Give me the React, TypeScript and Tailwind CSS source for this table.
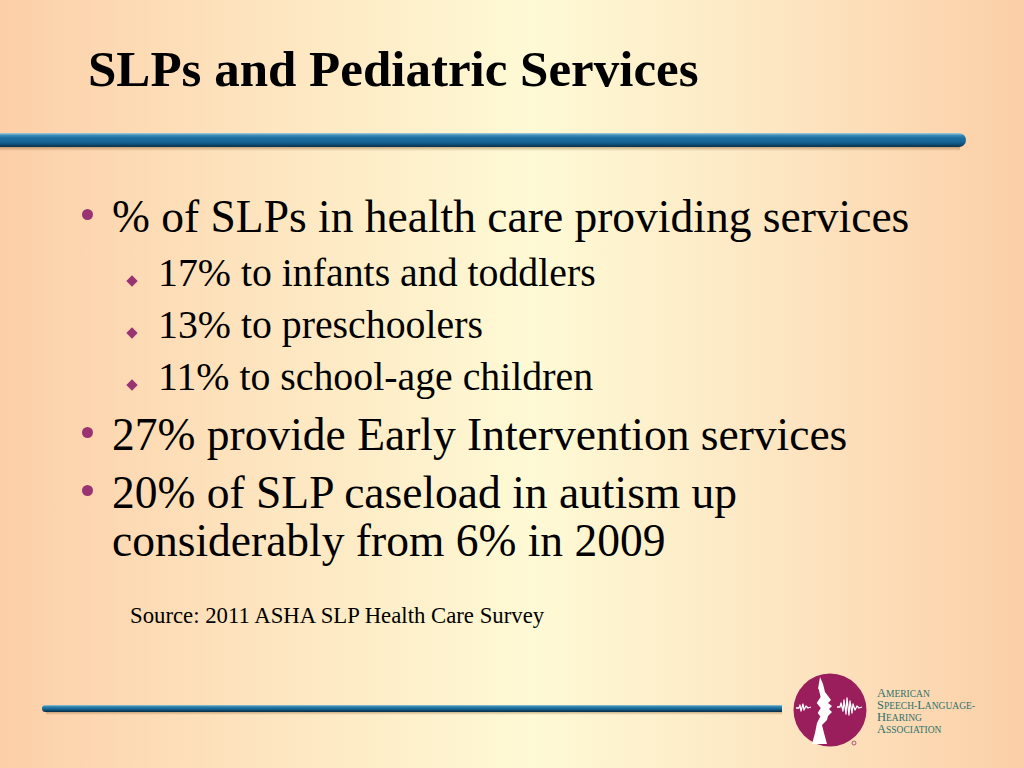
import React from "react";

function MainItem({ children, tight }: { children: React.ReactNode; tight?: boolean }) {
  return (
    <li
      className={
        tight
          ? "mt-[8px] flex items-start text-[45.5px] leading-[48px] [font-family:'Times_New_Roman','Liberation_Serif',serif]"
          : "mt-[6px] flex items-start text-[45.5px] leading-[52px] [font-family:'Times_New_Roman','Liberation_Serif',serif]"
      }
    >
      <span
        className={
          tight
            ? "mt-[16px] h-[11px] w-[11px] shrink-0 rounded-full bg-[#993374]"
            : "mt-[18px] h-[11px] w-[11px] shrink-0 rounded-full bg-[#993374]"
        }
      />
      <span className={tight ? "ml-[19px] w-[800px]" : "ml-[19px]"}>{children}</span>
    </li>
  );
}

function SubItem({ children }: { children: React.ReactNode }) {
  return (
    <li className="ml-[44px] flex items-start text-[39.8px] leading-[52px] [font-family:'Times_New_Roman','Liberation_Serif',serif]">
      <span className="mt-[28px] flex h-[11px] w-[11px] shrink-0 items-center justify-center">
        <span className="h-[8px] w-[8px] rotate-45 bg-[#993374]" />
      </span>
      <span className="ml-[21px]">{children}</span>
    </li>
  );
}

function AshaLogo() {
  return (
    <svg width="74" height="74" viewBox="0 0 74 74" className="shrink-0">
      <circle cx="37" cy="37" r="36.5" fill="#9a1d5c" />
      <path
        d="M27,4 L30,11 L32,19 L38,27 L35,30 L39,33 L36,36 L39,39 L35,43 L34,47 L29,52 L31,60 L34,71 L19,71 L22,60 L24,50 L27,44 L24,40 L27,35 L23,30 L27,24 L25,16 Z"
        fill="#ffffff"
      />
      <path d="M25,16 L27,24 L23,30 L27,35 L24,40 L27,44" fill="none" stroke="#9a1d5c" strokeWidth="1.2" />
      <polyline
        points="3,35 6,35 7,32 8,38 10,31 11,37 13,33 15,35 18,34"
        fill="none"
        stroke="#ffffff"
        strokeWidth="1.3"
        strokeLinejoin="round"
      />
      <polyline
        points="44,34 47,34 48,30 50,38 51,27 53,41 54,25 56,42 57,28 59,40 60,31 62,37 64,33 66,35 69,34"
        fill="none"
        stroke="#ffffff"
        strokeWidth="1.3"
        strokeLinejoin="round"
      />
      <circle cx="61" cy="70" r="2" fill="none" stroke="#9a1d5c" strokeWidth="0.7" />
    </svg>
  );
}

function LogoLine({ big, rest }: { big: string; rest: React.ReactNode }) {
  return (
    <div className="h-[12px] leading-[12px] whitespace-nowrap">
      <span className="text-[12.5px]">{big}</span>
      <span className="text-[9.5px]">{rest}</span>
    </div>
  );
}

export default function App() {
  return (
    <div className="flex h-[768px] w-[1024px] flex-col bg-[linear-gradient(90deg,#fccfa8_0%,#fde2bc_22%,#fefad5_52%,#fde6c2_76%,#fbcfa7_100%)] text-black [font-family:'Times_New_Roman','Liberation_Serif',serif]">
      <h1 className="pl-[88px] pt-[39px] text-[51px] font-bold leading-[60px] [font-family:'Times_New_Roman','Liberation_Serif',serif]">
        SLPs and Pediatric Services
      </h1>

      <div className="mt-[34px] h-[14px] w-[966px] rounded-r-full bg-[linear-gradient(180deg,#a8d0de_0%,#3d8db8_16%,#1a6d9e_36%,#166597_64%,#0e4a70_84%,#0a2f48_100%)]" />
      <div className="h-[4px] w-[960px] bg-[linear-gradient(180deg,rgba(130,85,40,0.45),rgba(130,85,40,0))]" />

      <ul className="mt-[34px] pl-[82px]">
        <MainItem>% of SLPs in health care providing services</MainItem>
        <div className="mt-[4px]">
          <SubItem>17% to infants and toddlers</SubItem>
          <SubItem>13% to preschoolers</SubItem>
          <SubItem>11% to school-age children</SubItem>
        </div>
        <MainItem>27% provide Early Intervention services</MainItem>
        <MainItem tight>20% of SLP caseload in autism up considerably from 6% in 2009</MainItem>
      </ul>

      <p className="mt-[37px] pl-[130px] text-[22.75px] leading-[28px]">
        Source: 2011 ASHA SLP Health Care Survey
      </p>

      <div className="mt-[43px] flex items-center pl-[42px]">
        <div className="flex flex-col">
          <div className="h-[7px] w-[740px] rounded-l-full rounded-r-[2px] bg-[linear-gradient(180deg,#9cc8d8_0%,#2a80ad_25%,#176796_55%,#0d4468_80%,#0a2e46_100%)]" />
          <div className="ml-[4px] h-[3px] w-[736px] bg-[linear-gradient(180deg,rgba(130,85,40,0.4),rgba(130,85,40,0))]" />
        </div>
        <div className="ml-[11px]">
          <AshaLogo />
        </div>
        <div className="ml-[10px] text-[#2e716c]">
          <LogoLine big="A" rest="MERICAN" />
          <LogoLine
            big="S"
            rest={
              <>
                PEECH-<span className="text-[12.5px]">L</span>ANGUAGE-
              </>
            }
          />
          <LogoLine big="H" rest="EARING" />
          <LogoLine big="A" rest="SSOCIATION" />
        </div>
      </div>
    </div>
  );
}
